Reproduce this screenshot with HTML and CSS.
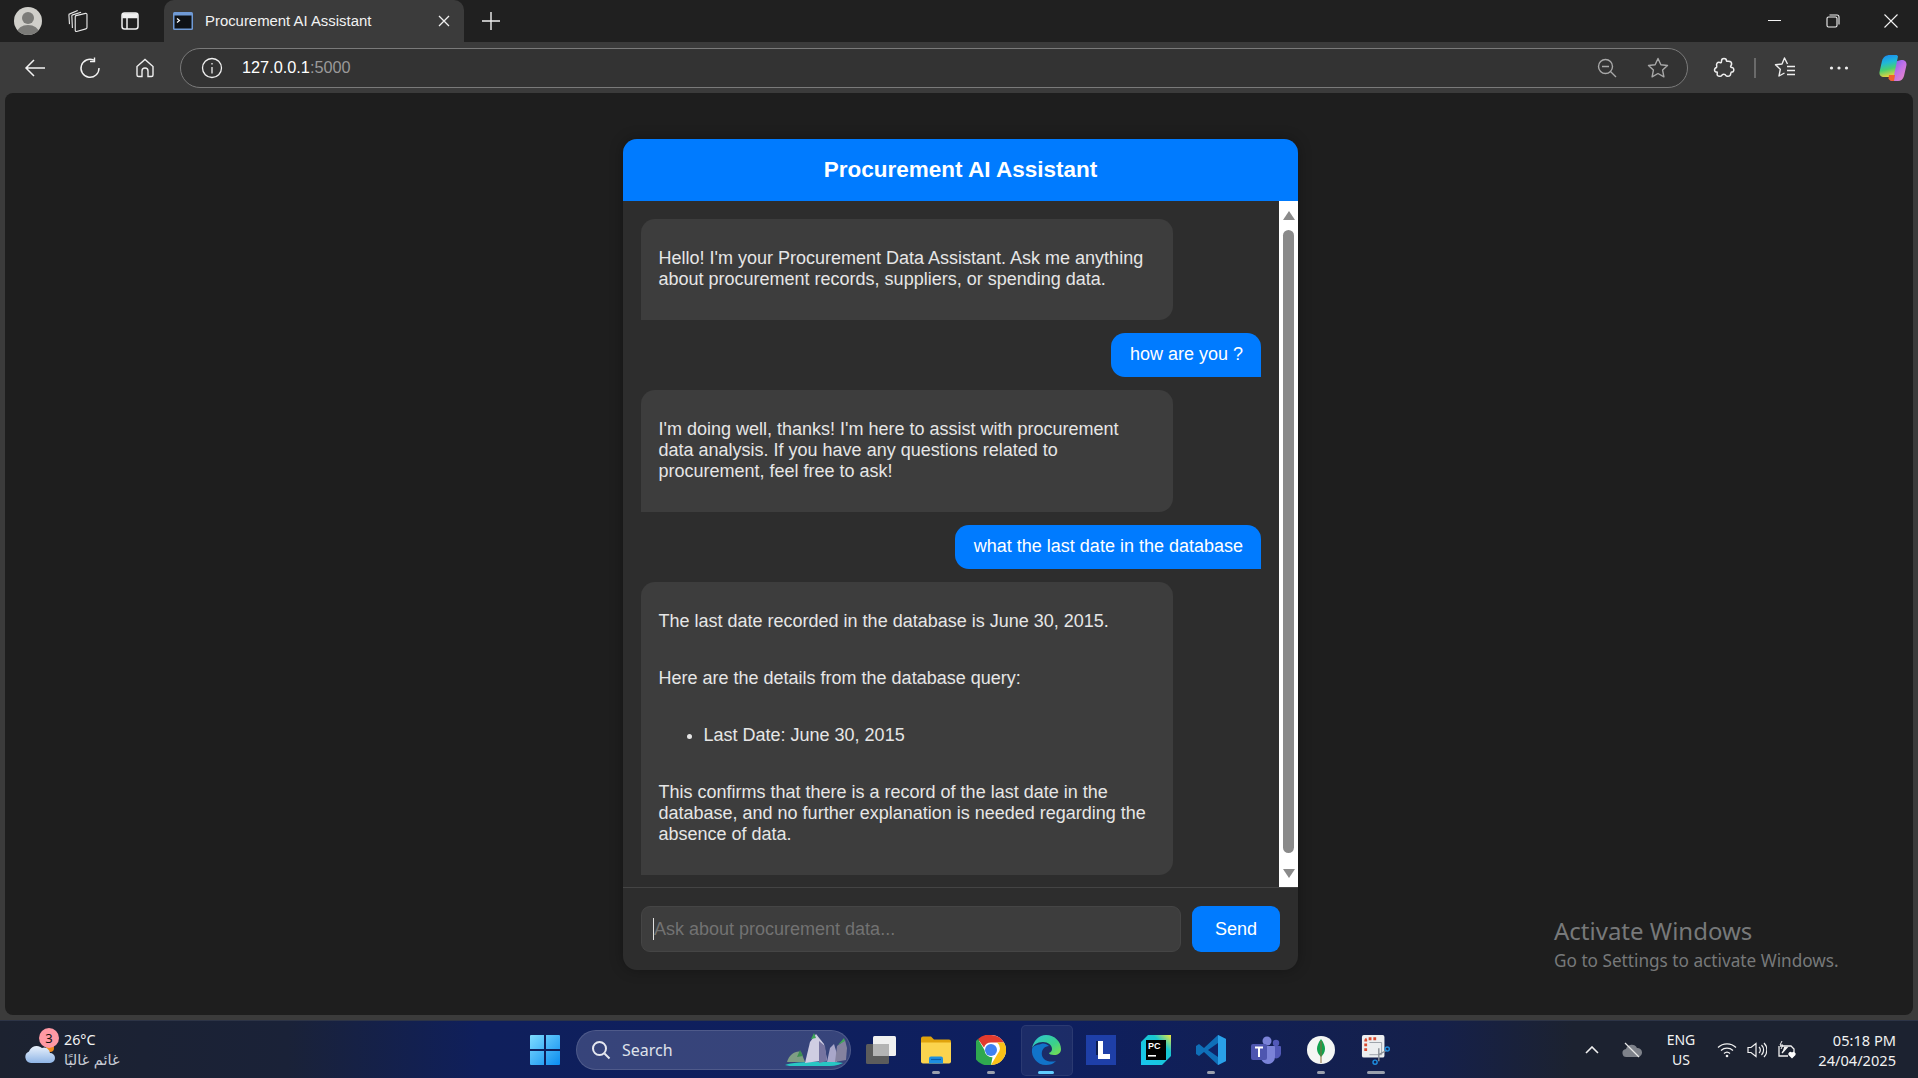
FILE: index.html
```html
<!DOCTYPE html>
<html lang="en">
<head>
<meta charset="utf-8">
<title>Procurement AI Assistant</title>
<link rel="stylesheet" href="styles.css">
</head>
<body>
<div class="screen">
  <header class="titlebar">
    <svg class="avatar" viewBox="0 0 28 28"><defs><clipPath id="av"><circle cx="14" cy="14" r="14"/></clipPath></defs><circle cx="14" cy="14" r="14" fill="#d0cfca"/><g clip-path="url(#av)"><circle cx="14" cy="11" r="6" fill="#7b7b78"/><ellipse cx="14" cy="26" rx="11" ry="8" fill="#7b7b78"/></g></svg>
    <svg class="tb-icon ic-collections" viewBox="4 2.500 17.500 19.500" fill="none" stroke="#e8e8e8" stroke-width="1"><path d="M11 7.500 19.500 5.500a1 1 0 0 1 1.200 1V18a1.200 1.200 0 0 1-1 1.200L11.500 21.500a1 1 0 0 1-1.200-1V8.500a1 1 0 0 1 .7-1z"/><path d="M7.800 18.500 7.300 8a1 1 0 0 1 .7-1.200L15.500 4.500"/><path d="M5.200 15 4.700 7a1 1 0 0 1 .8-1.100L12.500 3"/></svg>
    <svg class="tb-icon ic-vtabs" viewBox="0 0 24 24" fill="none" stroke="#f0f0f0" stroke-width="1.500"><rect x="4" y="4" width="16" height="16" rx="2.500"/><path d="M9 8.500V20"/><path d="M5 5h14v3.500H5z" fill="#f0f0f0"/></svg>
    <div class="tab">
      <svg class="favicon" viewBox="0 0 20 18"><rect width="20" height="18" rx="1.500" fill="#6f9ad6"/><rect x="1.500" y="3.500" width="17" height="13" fill="#0f1216"/><path d="M4 6.500 6.500 8.500 4 10.500" stroke="#fff" fill="none" stroke-width="1.200"/></svg>
      <span class="tab-title">Procurement AI Assistant</span>
      <svg class="tab-close" viewBox="0 0 12 12" stroke="#f0f0f0" stroke-width="1.300"><path d="M1 1l10 10M11 1 1 11"/></svg>
    </div>
    <svg class="tb-icon ic-plus" viewBox="0 0 20 20" stroke="#f0f0f0" stroke-width="1.400"><path d="M10 1v18M1 10h18"/></svg>
    <div class="window-controls">
      <svg class="win-btn" viewBox="0 0 14 14" stroke="#f4f4f4" stroke-width="1" fill="none"><path d="M0 6.500h13"/></svg>
      <svg class="win-btn" viewBox="0 0 14 14" stroke="#f4f4f4" stroke-width="1.100" fill="none"><rect x="1" y="3" width="10" height="10" rx="1.500"/><path d="M3.500 1h7.500A2 2 0 0 1 13 3v7.500"/></svg>
      <svg class="win-btn" viewBox="0 0 14 14" stroke="#f4f4f4" stroke-width="1.100" fill="none"><path d="M.5.5l13 13M13.500.5l-13 13"/></svg>
    </div>
  </header>

  <nav class="toolbar">
    <svg class="nav-icon ic-back" viewBox="0 0 22 22" fill="none" stroke="#f2f2f2" stroke-width="1.500"><path d="M21 11H2M10 3l-8 8 8 8"/></svg>
    <svg class="nav-icon ic-reload" viewBox="0 0 22 22" fill="none" stroke="#f2f2f2" stroke-width="1.400"><path d="M15 3.200A9 9 0 1 0 20 11"/><path d="M15.500 .5v4h-4.500"/></svg>
    <svg class="nav-icon ic-home" viewBox="0 0 22 22" fill="none" stroke="#eee" stroke-width="1.400"><path d="M3 9.500 11 2.500l8 7V18a1.500 1.500 0 0 1-1.500 1.500H14V14a3 3 0 0 0-6 0v5.500H4.500A1.500 1.500 0 0 1 3 18z"/></svg>
    <div class="address">
      <svg class="info" viewBox="0 0 22 22" fill="none" stroke="#f0f0f0" stroke-width="1.300"><circle cx="11" cy="11" r="9.500"/><path d="M11 10v6.500"/><path d="M11 6v1.600"/></svg>
      <span class="url"><span class="url-host">127.0.0.1</span><span class="url-port">:5000</span></span>
      <svg class="addr-icon ic-zoom" viewBox="0 0 20 20" fill="none" stroke="#a8a8a8" stroke-width="1.400"><circle cx="8.500" cy="8.500" r="7"/><path d="M13.500 13.500 19 19M5 8.500h7"/></svg>
      <svg class="addr-icon ic-star" viewBox="0 0 22 22" fill="none" stroke="#a8a8a8" stroke-width="1.400" stroke-linejoin="round"><path d="m11 1.500 2.900 6.200 6.600.8-4.900 4.600 1.300 6.700L11 16.500l-5.900 3.300 1.300-6.700L1.500 8.500l6.600-.8z"/></svg>
    </div>
    <svg class="nav-icon ic-ext" viewBox="0 0 22 22" fill="none" stroke="#eee" stroke-width="1.500" stroke-linejoin="round"><path d="M8.500 4a2.500 2.500 0 0 1 5 0c0 .8 3.500-.3 4.500 1s.2 3.500-.3 4.200c-.4.700.3 1.300 1 1.200 2.800-.2 2.800 5 0 4.700-1.200-.1-.7 2.400-1.700 3.400s-3.500 1.200-4 .2c-.7-2-3.700-2-4.400 0-.5 1-3 .8-4.100-.2s.5-3-.5-3.500c-2.800.5-3.500-3.500-.5-4.500 1-.4-.8-2.800.5-4.300s2.800-.8 4-.4c.4 0 .5-.6.500-1.600z"/></svg>
    <span class="divider"></span>
    <svg class="nav-icon ic-fav" viewBox="0 0 22 22" fill="none" stroke="#eee" stroke-width="1.400" stroke-linejoin="round"><path d="M13.500 7 10.500 1 8 7l-6.500.8 4.800 4.500L5 19l5.500-3"/><path d="M13 9.500h8M13 13.500h8M13 17.500h8"/></svg>
    <svg class="nav-icon ic-more" viewBox="0 0 22 22" fill="#eee"><circle cx="3.500" cy="11" r="1.600"/><circle cx="11" cy="11" r="1.600"/><circle cx="18.500" cy="11" r="1.600"/></svg>
    <svg class="nav-icon ic-copilot" viewBox="0 0 28 26">
      <defs>
        <linearGradient id="cpA" x1=".3" y1="0" x2=".5" y2="1"><stop offset="0" stop-color="#1a8cf2"/><stop offset=".35" stop-color="#20b8d8"/><stop offset=".65" stop-color="#48d070"/><stop offset="1" stop-color="#f2d23a"/></linearGradient>
        <linearGradient id="cpB" x1="0" y1="0" x2="1" y2="1"><stop offset="0" stop-color="#6a5cf0"/><stop offset=".5" stop-color="#c070e8"/><stop offset="1" stop-color="#f08ac0"/></linearGradient>
      </defs>
      <path d="M15 7l7-2c3-.5 6 1.500 5.500 5L25 21c-.8 3-3 5-6 5h-6c-1.500 0-2-1-1.500-2z" fill="url(#cpB)"/>
      <path d="M11 0h6c1 0 1.800.6 2 1.600L15 20c-.400 1.500-1.500 2-3 2H5c-3 0-5-2-4.500-5L3 6C4 2 7 0 11 0z" fill="url(#cpA)"/>
      <path d="M10 20h6l-1 6h-2c-1.500 0-3-1-3.500-2.500z" fill="#f0622c"/>
    </svg>
  </nav>

  <main class="page">
    <section class="chat-card">
      <h1 class="chat-title">Procurement AI Assistant</h1>
      <div class="chat-body">
        <div class="messages">
          <div class="msg bot"><p>Hello! I'm your Procurement Data Assistant. Ask me anything about procurement records, suppliers, or spending data.</p></div>
          <div class="msg user">how are you ?</div>
          <div class="msg bot"><p>I'm doing well, thanks! I'm here to assist with procurement data analysis. If you have any questions related to procurement, feel free to ask!</p></div>
          <div class="msg user">what the last date in the database</div>
          <div class="msg bot">
            <p>The last date recorded in the database is June 30, 2015.</p>
            <p>Here are the details from the database query:</p>
            <ul><li>Last Date: June 30, 2015</li></ul>
            <p>This confirms that there is a record of the last date in the database, and no further explanation is needed regarding the absence of data.</p>
          </div>
        </div>
        <div class="scrollbar">
          <span class="arrow-up"></span>
          <span class="thumb"></span>
          <span class="arrow-down"></span>
        </div>
      </div>
      <form class="composer">
        <div class="input"><span class="caret"></span><span class="placeholder">Ask about procurement data...</span></div>
        <button class="send" type="button">Send</button>
      </form>
    </section>
    <aside class="activate">
      <div class="activate-title">Activate Windows</div>
      <div class="activate-sub">Go to Settings to activate Windows.</div>
    </aside>
  </main>

  <footer class="taskbar">
    <div class="weather">
      <svg class="cloud" viewBox="0 0 30 20"><defs><linearGradient id="cl" x1="0" y1="0" x2="0" y2="1"><stop offset="0" stop-color="#eaf2fc"/><stop offset="1" stop-color="#8fb5e6"/></linearGradient></defs><circle cx="25" cy="5" r="4" fill="#f08a1c"/><path d="M6 20a6 6 0 0 1-2-11.500A8 8 0 0 1 17 5a6 6 0 0 1 8 5 5 5 0 0 1 0 10z" fill="url(#cl)"/></svg>
      <span class="badge">3</span>
      <div class="weather-text"><span class="temp">26°C</span><span class="cond" lang="ar" dir="rtl">غائم غالبًا</span></div>
    </div>
    <div class="task-icons">
      <svg class="ti start" viewBox="0 0 30 30"><defs><linearGradient id="st" x1="0" y1="0" x2="1" y2="1"><stop offset="0" stop-color="#7fdcff"/><stop offset="1" stop-color="#0a8cf0"/></linearGradient></defs><path d="M0 1a1 1 0 0 1 1-1h13v14H0zM16 0h13a1 1 0 0 1 1 1v13H16zM0 16h14v14H1a1 1 0 0 1-1-1zM16 16h14v13a1 1 0 0 1-1 1H16z" fill="url(#st)"/></svg>
      <div class="search">
        <svg class="search-icon" viewBox="0 0 20 20" fill="none" stroke="#e6e8f0" stroke-width="2"><circle cx="8.500" cy="8.500" r="6.500"/><path d="m13.500 13.500 5 5"/></svg>
        <span class="search-text">Search</span>
        <svg class="search-art" viewBox="0 0 62 34">
          <path d="M0 33c8-4 50-4 58-2-6 3-12 3-18 3H10C6 34 3 34 0 33z" fill="#28c7c4"/>
          <path d="M2 30c2-8 10-12 14-10l4 10z" fill="#7f9e84"/>
          <path d="M20 31 25 10l6-8 8 10 3 16z" fill="#cfcde2"/>
          <path d="M34 9l6 5 2 15-8 2z" fill="#7674a0"/>
          <path d="M42 30l3-14 4-4 3 10v8z" fill="#a9a7ca"/>
          <path d="M50 30l2-16 8-6 2 8-1 12z" fill="#84829f"/>
          <path d="M26 7l3-6 2 5zM53 13l6-7 1 3z" fill="#3fa758"/>
          <path d="M12 25l3-7 3 6z" fill="#3c8f52"/>
        </svg>
      </div>
      <svg class="ti taskview" viewBox="0 0 30 28"><rect y="8" width="23" height="20" rx="1.500" fill="#5c5c5c"/><rect x="7" width="23" height="20" rx="1.500" fill="#f0f0f0"/><rect x="7" y="8" width="16" height="12" fill="#b4b4b4"/></svg>
      <div class="ti-wrap">
        <svg class="ti" viewBox="0 0 30 27"><path d="M0 2a2 2 0 0 1 2-2h8l3 3h15a2 2 0 0 1 2 2v4H0z" fill="#e0a30c"/><path d="M0 6h30v19a2 2 0 0 1-2 2H2a2 2 0 0 1-2-2z" fill="#fbd44e"/><path d="M8 22a2 2 0 0 1 2-2h10a2 2 0 0 1 2 2v5H8z" fill="#1d8fe0"/><path d="M10 23h10" stroke="#0c5fa8" stroke-width="1.200"/></svg>
        <span class="dot"></span>
      </div>
      <div class="ti-wrap">
        <svg class="ti" viewBox="0 0 30 30"><circle cx="15" cy="15" r="15" fill="#fff"/><path d="M15 0a15 15 0 0 1 13 7.500H15a7.500 7.500 0 0 0-7 5L2 4A15 15 0 0 1 15 0z" fill="#e33b2e"/><path d="M28 7.500A15 15 0 0 1 15 30l6.500-11a7.500 7.500 0 0 0-.5-11.500z" fill="#fbc116"/><path d="M15 30A15 15 0 0 1 2 4l6.500 11a7.500 7.500 0 0 0 8 7.300z" fill="#2fa84f"/><circle cx="15" cy="15" r="6" fill="#3f81f1"/></svg>
        <span class="dot"></span>
      </div>
      <div class="ti-wrap ti-active">
        <svg class="ti" viewBox="0 0 30 30"><defs><linearGradient id="ed" x1="0" y1="0" x2="1" y2="1"><stop offset="0" stop-color="#2cc4d8"/><stop offset=".6" stop-color="#3bd18a"/><stop offset="1" stop-color="#7fe04a"/></linearGradient></defs><path d="M1 14C2 6 8 0 15 0c9 0 15 7 15 14 0 4-3 6-7 6-3 0-5-1-5-2 0 0 3-1 3-4 0-4-4-7-9-7C6 7 2 10 1 14z" fill="url(#ed)"/><path d="M1 14c-1 8 5 16 14 16 4 0 7-1 10-4-3 1-9 1-12-2-3-3-3-8 0-11 1-1 3-2 5-2-2-2-5-3-8-2C5 10 2 11 1 14z" fill="#1173c9"/></svg>
        <span class="dot dot-active"></span>
      </div>
      <svg class="ti" viewBox="0 0 30 30"><rect width="30" height="30" fill="#1e3fa8"/><path d="M10 6h6v14h-6z" fill="#0c1c50"/><path d="M12 6h5v13h7v5H12z" fill="#fff"/></svg>
      <svg class="ti" viewBox="0 0 30 30"><defs><linearGradient id="pc" x1="0" y1="1" x2="1" y2="0"><stop offset="0" stop-color="#18c6f0"/><stop offset=".7" stop-color="#18c6d0"/><stop offset="1" stop-color="#f4e83a"/></linearGradient></defs><path d="M7 0h23v21l-9 9H0V7z" fill="url(#pc)"/><rect x="5" y="5" width="20" height="20" fill="#000"/><text class="pc-text" x="7" y="14">PC</text><rect x="7" y="20" width="8" height="1.600" fill="#fff"/></svg>
      <div class="ti-wrap">
        <svg class="ti" viewBox="0 0 30 30"><path d="M22 0 30 4v22l-8 4L8 17l-5 4-3-2v-8l3-2 5 4z" fill="#0f6fb8"/><path d="M22 0 30 4v22l-8 4z" fill="#2aa0e8"/><path d="M22 8 12 15l10 7z" fill="#0e2468"/></svg>
        <span class="dot"></span>
      </div>
      <svg class="ti" viewBox="0 0 30 30"><circle cx="16" cy="6" r="4.500" fill="#7b83d8"/><circle cx="25" cy="8" r="3.200" fill="#5259b8"/><path d="M20 11h9a1 1 0 0 1 1 1v7a5 5 0 0 1-7 4z" fill="#5259b8"/><path d="M9 11h14a1 1 0 0 1 1 1v10a7 7 0 0 1-14 0z" fill="#7b83d8"/><rect y="9" width="16" height="16" rx="2" fill="#4e56b0"/><path d="M4 12.500h8M8 12.500V22" stroke="#fff" stroke-width="2"/></svg>
      <div class="ti-wrap">
        <svg class="ti" viewBox="0 0 30 30"><circle cx="15" cy="15" r="14" fill="#f4f6f4"/><path d="M15 4c3 4 4 7 4 10s-2 6-4 8c-2-2-4-5-4-8s1-6 4-10z" fill="#13a14e"/><path d="M15 6v22" stroke="#8a6a3a"/></svg>
        <span class="dot"></span>
      </div>
      <div class="ti-wrap">
        <svg class="ti" viewBox="0 0 30 32"><rect width="24" height="24" rx="2" fill="#eceef0"/><path d="M4 17V6a2 2 0 0 1 2-2h11" fill="none" stroke="#d84a30" stroke-width="3" stroke-dasharray="3 2"/><path d="M8 8h13v13H8" fill="none" stroke="#9aa0a8" stroke-width="1"/><path d="M18 14v14M18 21l9-5" stroke="#8a8f96" stroke-width="1.500"/><circle cx="27" cy="15" r="2.200" fill="none" stroke="#1e8ee0" stroke-width="1.500"/><circle cx="14" cy="29" r="2.200" fill="none" stroke="#1e8ee0" stroke-width="1.500"/></svg>
        <span class="dot dot-wide"></span>
      </div>
    </div>
    <div class="tray">
      <svg class="tray-chevron" viewBox="0 0 14 8" fill="none" stroke="#f0f0f0" stroke-width="1.600"><path d="m1 7 6-6 6 6"/></svg>
      <svg class="tray-cloud" viewBox="0 0 20 16"><path d="M5 15a4 4 0 0 1-1-8 6 6 0 0 1 11-1 4.500 4.500 0 0 1 1 9z" fill="#7e828a"/><path d="M3 1 17 15" stroke="#e8e8e8" stroke-width="1.200"/></svg>
      <div class="lang"><span>ENG</span><span>US</span></div>
      <svg class="tray-ic" viewBox="0 0 20 16" fill="none" stroke="#f0f0f0" stroke-width="1.300"><path d="M1 5.500a13 13 0 0 1 18 0M4 8.500a9 9 0 0 1 12 0M7 11.500a4.500 4.500 0 0 1 6 0"/><circle cx="10" cy="14" r="1.300" fill="#f0f0f0" stroke="none"/></svg>
      <svg class="tray-ic" viewBox="0 0 20 16" fill="none" stroke="#f0f0f0" stroke-width="1.200"><path d="M1 5.500h3L9 1.500v13L4 10.500H1z"/><path d="M12 5a4 4 0 0 1 0 6M14.500 3a7 7 0 0 1 0 10M17 1a10 10 0 0 1 0 14"/></svg>
      <svg class="tray-ic" viewBox="0 0 20 18" fill="none" stroke="#f0f0f0" stroke-width="1.300"><path d="M3 5h11l3 3v3M2 5v10h9"/><path d="M5 12 10 6.500h-3" fill="#f0f0f0"/><path d="M5 0 3 4h3L4 8" stroke-width="1"/><path d="M15 17.500 11.500 14a2.200 2.200 0 0 1 3.500-2.500 2.200 2.200 0 0 1 3.500 2.500z" fill="#fff" stroke="none"/></svg>
      <div class="clock"><span>05:18 PM</span><span>24/04/2025</span></div>
    </div>
  </footer>
</div>
</body>
</html>
```

FILE: styles.css
```css
* { box-sizing: border-box; }
html, body { margin: 0; padding: 0; }
body { background: #202020; overflow: hidden; }

.screen {
  width: 1918px; height: 1078px;
  display: flex; flex-direction: column;
  background: #3b3b3b;
  font-family: "Noto Sans", "DejaVu Sans", sans-serif;
}

/* title bar */
.titlebar {
  height: 42px; flex: none;
  display: flex; align-items: center;
  background: #202020;
}
.avatar { width: 28px; height: 28px; margin-left: 14px; flex: none; }
.tb-icon { flex: none; }
.ic-collections { width: 22px; height: 22px; margin-left: 25px; }
.ic-vtabs { width: 24px; height: 24px; margin-left: 29px; }
.tab {
  width: 300px; height: 42px; margin-left: 22px; flex: none;
  display: flex; align-items: center;
  background: #3b3b3b;
  border-radius: 10px 10px 0 0;
}
.favicon { width: 20px; height: 18px; margin-left: 9px; flex: none; }
.tab-title { margin-left: 12px; width: 233px; font-size: 14.9px; color: #f2f2f2; white-space: nowrap; font-family: "Liberation Sans", sans-serif; }
.tab-close { width: 12px; height: 12px; flex: none; }
.ic-plus { width: 20px; height: 20px; margin-left: 17px; }
.window-controls { margin-left: auto; display: flex; align-items: center; gap: 44px; padding-right: 20px; }
.win-btn { width: 14px; height: 14px; }

/* toolbar */
.toolbar {
  height: 51px; flex: none;
  display: flex; align-items: center;
  background: #3b3b3b;
}
.nav-icon { width: 22px; height: 22px; flex: none; }
.ic-back { margin-left: 24px; }
.ic-reload { margin-left: 33px; }
.ic-home { margin-left: 33px; }
.address {
  width: 1508px; height: 40px; margin-left: 24px; flex: none;
  display: flex; align-items: center;
  border: 1.5px solid #7a7a7a; border-radius: 20px;
  background: #333;
}
.info { width: 22px; height: 22px; margin-left: 20px; flex: none; }
.url { margin-left: 19px; font-size: 16.3px; font-family: "Liberation Sans", sans-serif; }
.url-host { color: #fff; }
.url-port { color: #9a9a9a; }
.addr-icon { flex: none; }
.ic-zoom { width: 20px; height: 20px; margin-left: auto; }
.ic-star { width: 22px; height: 22px; margin-left: 30px; margin-right: 18px; }
.ic-ext { margin-left: 25px; }
.divider { width: 2px; height: 20px; background: #6a6a6a; margin-left: 19px; flex: none; }
.ic-fav { margin-left: 18px; }
.ic-more { margin-left: 32px; }
.ic-copilot { width: 28px; height: 26px; margin-left: 29px; }

/* page */
.page {
  position: relative;
  height: 922px; flex: none;
  margin: 0 5px;
  padding: 46px 0 0 3px;
  display: flex; justify-content: center; align-items: flex-start;
  background: #1e1e1e;
  border-radius: 8px;
  font-family: "Liberation Sans", Arial, sans-serif;
}
.chat-card {
  width: 675px; height: 831px;
  display: flex; flex-direction: column;
  background: #2d2d2d;
  border-radius: 14px;
  overflow: hidden;
  box-shadow: 0 0 14px rgba(0,0,0,.3);
}
.chat-title {
  margin: 0; height: 62px; flex: none;
  display: flex; align-items: center; justify-content: center;
  background: #007bff; color: #fff;
  font-size: 22.5px; font-weight: 700;
}
.chat-body { height: 687px; flex: none; display: flex; border-bottom: 1px solid #444; }
.messages {
  flex: 1; min-width: 0;
  display: flex; flex-direction: column; gap: 13px;
  padding: 18px 18px 0;
  font-size: 18px; color: #e6e6e6;
}
.msg { padding: 10.5px 18px 12.5px; border-radius: 14px; flex: none; }
.msg p { margin: 18px 0; }
.msg ul { margin: 18px 0; padding-left: 45px; }
.bot {
  width: 532px; padding-left: 17.5px;
  display: flex; flex-direction: column;
  background: #3d3d3d;
  border-bottom-left-radius: 0;
}
.user { align-self: flex-end; padding-left: 18.500px; background: #007bff; color: #fff; border-bottom-right-radius: 0; }
.scrollbar {
  width: 19px; flex: none;
  display: flex; flex-direction: column; align-items: center;
  background: #fff;
  padding: 10px 0 9px;
}
.arrow-up { width: 0; height: 0; border: 6px solid transparent; border-top: 0; border-bottom: 9px solid #8a8a8a; flex: none; }
.arrow-down { width: 0; height: 0; border: 6px solid transparent; border-bottom: 0; border-top: 9px solid #8a8a8a; flex: none; }
.thumb { width: 11px; flex: 1; margin: 10px 0 16px; background: #8a8a8a; border-radius: 6px; }
.composer { display: flex; gap: 11px; padding: 18px; flex: 1; }
.input {
  width: 540px; height: 46px;
  display: flex; align-items: center;
  padding-left: 11px;
  background: #3d3d3d; border: 1px solid #454545; border-radius: 9px;
  font-size: 18px; color: #727272;
}
.caret { width: 1px; height: 22px; background: #e0e0e0; flex: none; }
.send {
  width: 88px; height: 46px;
  border: 0; border-radius: 9px;
  background: #007bff; color: #fff;
  font: 18px "Liberation Sans", Arial, sans-serif;
}
.activate { position: absolute; left: 1549px; top: 822px; color: #77797a; }
.activate-title { font-size: 24px; line-height: 32px; }
.activate-sub { font-size: 17.2px; line-height: 28px; }
.activate, .activate-title, .activate-sub { font-family: "Noto Sans", sans-serif; }

/* task bar */
.taskbar {
  position: relative;
  margin-top: 5px;
  height: 58px; flex: 1;
  display: flex; align-items: center;
  background: linear-gradient(90deg, #1c2230 0, #1a2238 15%, #0f1f5c 25%, #0e1f5f 55%, #15204a 75%, #1c2230 82%, #1c2230 100%);
  border-top: 1px solid #2d3446;
  color: #f2f2f2;
}
.weather { position: relative; width: 519px; flex: none; display: flex; align-items: center; height: 100%; padding-left: 25px; }
.cloud { width: 30px; height: 20px; margin-top: 6px; flex: none; }
.badge {
  position: absolute; left: 39px; top: 7px;
  width: 20px; height: 20px; border-radius: 50%;
  background: #ff99a4; color: #111;
  font-size: 13px; line-height: 20px; text-align: center;
}
.weather-text { margin-left: 9px; display: flex; flex-direction: column; align-items: flex-start; font-size: 14.3px; line-height: 20px; }
.cond { color: #c8ccd6; font-size: 14.5px; font-family: "DejaVu Sans", sans-serif; }
.task-icons { display: flex; align-items: center; gap: 25px; margin-left: 11px; height: 100%; }
.ti { width: 30px; height: 30px; flex: none; display: block; }
.start { margin-right: -9px; }
.ti-wrap { position: relative; width: 30px; height: 30px; flex: none; }
.ti-active::before {
  content: ""; position: absolute; left: -10px; top: -10px; width: 50px; height: 49px;
  background: rgba(255,255,255,.06); border: 1px solid rgba(255,255,255,.07); border-radius: 5px;
}
.ti-active .ti { position: relative; }
.dot { position: absolute; left: 11px; top: 36px; width: 8px; height: 3px; border-radius: 2px; background: #9aa0ad; }
.dot-active { left: 7px; width: 16px; background: #60cdff; }
.dot-wide { left: 6px; width: 18px; }
.search {
  width: 275px; height: 40px; flex: none;
  display: flex; align-items: center;
  margin-right: -10px;
  background: rgba(120,130,170,.38);
  border: 1px solid rgba(255,255,255,.12);
  border-radius: 20px;
}
.search-icon { width: 20px; height: 20px; margin-left: 14px; flex: none; }
.search-text { margin-left: 11px; font-size: 16px; color: #dfe2ea; }
.search-art { width: 62px; height: 34px; margin-left: auto; margin-right: 3px; margin-top: -2px; flex: none; }
.pc-text { font: 700 9px "Liberation Sans", sans-serif; fill: #fff; }
.tray { margin-left: auto; display: flex; align-items: center; height: 100%; padding-right: 22px; }
.tray-chevron { width: 14px; height: 8px; }
.tray-cloud { width: 20px; height: 16px; margin-left: 23px; }
.lang { width: 38px; margin-left: 20px; display: flex; flex-direction: column; align-items: center; font-size: 14px; line-height: 20px; }
.tray-ic { width: 20px; height: 18px; margin-left: 10px; }
.lang + .tray-ic { margin-left: 17px; }
.clock { margin-left: 21px; width: 78px; display: flex; flex-direction: column; align-items: flex-end; font-size: 14.6px; line-height: 20px; white-space: nowrap; }
```
